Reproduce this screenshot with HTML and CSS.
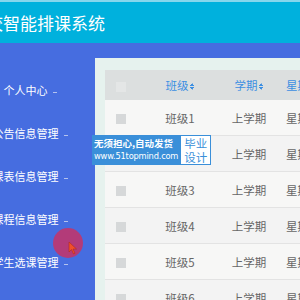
FILE: index.html
```html
<!DOCTYPE html>
<html lang="zh">
<head>
  <meta charset="UTF-8" />
  <title>学校智能排课系统</title>
  <link rel="stylesheet" href="styles.css">
</head>
<body>
  <div class="page">
    <div class="header">学校智能排课系统</div>

    <div class="layout">
      <ul class="sidebar">
        <li>个人中心<span class="arrow"></span></li>
        <li>公告信息管理<span class="arrow"></span></li>
        <li>课表信息管理<span class="arrow"></span></li>
        <li>课程信息管理<span class="arrow"></span></li>
        <li>学生选课管理<span class="arrow"></span></li>
      </ul>

      <div class="main">
        <table class="grid">
          <colgroup>
            <col class="c-check">
            <col class="c-class">
            <col class="c-term">
            <col class="c-week">
          </colgroup>
          <thead>
            <tr>
              <th><span class="box"></span></th>
              <th>班级<span class="sort"></span></th>
              <th>学期<span class="sort"></span></th>
              <th>星期</th>
            </tr>
          </thead>
          <tbody id="rows"></tbody>
        </table>
      </div>
    </div>
  </div>

  <!-- watermark badge -->
  <div class="badge">
    <div class="badge-left">
      <div>无须担心,自动发货</div>
      <div class="site">www.51topmind.com</div>
    </div>
    <div class="badge-right">毕业<br>设计</div>
  </div>

  <!-- cursor highlight -->
  <div class="pointer">
    <svg width="10" height="14" viewBox="0 0 10 14">
      <path d="M1 1 L1 11 L3.5 8.5 L5.5 13 L7 12.3 L5 8 L8.5 8 Z" fill="#f0502a" stroke="#b02a20" stroke-width="0.6"/>
    </svg>
  </div>

  <script>
    const rows = document.getElementById("rows");
    for (let i = 1; i <= 6; i++) {
      const tr = document.createElement("tr");
      tr.innerHTML = `
        <td><span class="box"></span></td>
        <td>班级${i}</td>
        <td>上学期</td>
        <td>星期一</td>
      `;
      rows.appendChild(tr);
    }
  </script>
</body>
</html>
```

FILE: styles.css
```css
html, body {
  margin: 0;
  padding: 0;
  overflow: hidden;
}

body {
  width: 300px;
  height: 300px;
  position: relative;
  font-family: "Noto Sans CJK SC", "Noto Sans", sans-serif;
  background: #e6f2ee;
}

/* page is scrolled a bit to the right in the shot */
.page {
  margin-left: -35px;
  width: 400px;
}

.header {
  height: 41px;
  border-top: 2px solid #86d6ec;
  background: #00b1dd;
  color: #fff;
  font-size: 17px;
  line-height: 42px;
  padding-left: 4px;
  white-space: nowrap;
}

.layout {
  display: flex;
  height: 257px;
}

.sidebar {
  list-style: none;
  margin: 0;
  padding: 39px 0 0;
  width: 130px;
  flex: none;
  background: #466de0;
}

.sidebar li {
  height: 43px;
  color: #fff;
  font-size: 11px;
  text-align: center;
  white-space: nowrap;
}

.sidebar .arrow {
  display: inline-block;
  width: 4px;
  height: 1px;
  margin-left: 5px;
  vertical-align: middle;
  background: #b4c2ee;
}

.main {
  flex: 1;
  border-top: 15px solid #466de0;
  padding: 12px 0 0 10px;
  background: #e6f2ee;
}

.grid {
  border-collapse: collapse;
  table-layout: fixed;
  width: 260px;
  font-size: 11.5px;
  color: #666;
}

.c-check { width: 32px; }
.c-class { width: 86px; }
.c-term { width: 52px; }
.c-week { width: 90px; }

.grid th {
  height: 30px;
  padding: 0;
  background: #dcdfdf;
  color: #3d8fe2;
  font-weight: normal;
  text-align: center;
}

.grid th:last-child,
.grid td:last-child {
  text-align: left;
  padding-left: 11px;
}

.grid td {
  height: 35px;
  padding: 0;
  text-align: center;
  border-bottom: 1px solid #e3e3e3;
  background: #f7f7f6;
  white-space: nowrap;
}

.grid tbody tr:nth-child(even) td {
  background: #f3f3f3;
}

.box {
  display: inline-block;
  width: 10px;
  height: 10px;
  vertical-align: middle;
  background: #d6d8d9;
}

th .box {
  background: #e4e6e6;
}

.sort {
  display: inline-block;
  width: 5px;
  height: 7px;
  margin-left: 1px;
  vertical-align: middle;
  background:
    linear-gradient(to bottom right, transparent 50%, #3d8fe2 50%) left top / 50% 3px no-repeat,
    linear-gradient(to bottom left, transparent 50%, #3d8fe2 50%) right top / 50% 3px no-repeat,
    linear-gradient(to top right, transparent 50%, #3d8fe2 50%) left bottom / 50% 3px no-repeat,
    linear-gradient(to top left, transparent 50%, #3d8fe2 50%) right bottom / 50% 3px no-repeat;
}

.badge {
  position: absolute;
  left: 92px;
  top: 135px;
  display: flex;
  height: 30px;
  white-space: nowrap;
}

.badge-left {
  background: #3a8fd9;
  color: #fff;
  padding: 2px 2px 0 2px;
  font-size: 9.5px;
  line-height: 13px;
  font-weight: bold;
}

.badge-left .site {
  font-weight: normal;
  font-family: "DejaVu Sans", sans-serif;
  font-size: 8.3px;
  letter-spacing: -0.2px;
}

.badge-right {
  background: #fff;
  border: 1px solid #3a8fd9;
  color: #3a8fd9;
  font-size: 11.5px;
  line-height: 14px;
  padding: 0 3px;
}

.pointer {
  position: absolute;
  left: 53px;
  top: 228px;
  width: 30px;
  height: 30px;
  border-radius: 50%;
  background: rgba(222, 40, 80, 0.72);
}

.pointer svg {
  position: absolute;
  left: 15px;
  top: 13px;
}
```
